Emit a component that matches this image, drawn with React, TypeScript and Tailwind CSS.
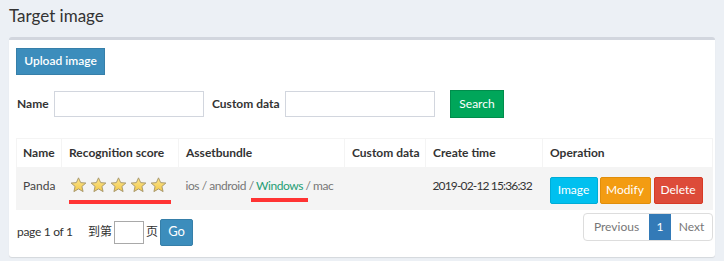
import React from "react";

const Star = () => (
  <svg width="17" height="16" viewBox="0 0 24 23">
    <defs>
      <linearGradient id="sg" x1="0" y1="0" x2="0" y2="1">
        <stop offset="0" stopColor="#fde58a" />
        <stop offset="1" stopColor="#f2c94c" />
      </linearGradient>
    </defs>
    <path
      d="M12 1.2 L15.1 8.1 L22.6 8.7 L16.9 13.6 L18.6 21 L12 17.1 L5.4 21 L7.1 13.6 L1.4 8.7 L8.9 8.1 Z"
      fill="url(#sg)"
      stroke="#a8976a"
      strokeWidth="1.4"
      strokeLinejoin="round"
    />
  </svg>
);

export default function App() {
  const font = { fontFamily: "Lato, 'Noto Sans CJK SC', sans-serif" };
  return (
    <div className="w-[724px] h-[261px] bg-[#ecf0f5] text-[#333] overflow-hidden whitespace-nowrap" style={font}>
      <div className="h-[37px] pl-[9px] pt-[4px] text-[17px] leading-[24px] text-[#333]">Target image</div>
      <div className="ml-[9px] w-[706px] h-[220px] bg-white border-t-[3px] border-[#d2d6de] rounded-[3px] shadow-[0_1px_1px_rgba(0,0,0,0.1)] px-[7px] pt-[7px]">
        <button className="h-[27px] w-[89px] bg-[#3c8dbc] border border-[#367fa9] text-white text-[12px] font-semibold">
          Upload image
        </button>
        <div className="flex items-center mt-[15px] h-[28px] text-[12px]">
          <span className="font-bold ml-[1px] w-[37px]">Name</span>
          <input className="w-[150px] h-[26px] border border-[#d2d6de] outline-none" />
          <span className="font-bold ml-[8px] w-[73px]">Custom data</span>
          <input className="w-[150px] h-[26px] border border-[#d2d6de] outline-none" />
          <button className="ml-[15px] w-[54px] h-[28px] bg-[#00a65a] border border-[#008d4c] text-white text-[12px]">
            Search
          </button>
        </div>
        <table className="mt-[20px] w-[697px] table-fixed border-collapse border border-[#f4f4f4] text-[12px]">
          <thead>
            <tr className="h-[29px] font-bold text-left">
              <th className="w-[45px] border border-[#f4f4f4] px-[6px]">Name</th>
              <th className="w-[117px] border border-[#f4f4f4] px-[7px]">Recognition score</th>
              <th className="w-[166px] border border-[#f4f4f4] px-[7px]">Assetbundle</th>
              <th className="w-[81px] border border-[#f4f4f4] px-[7px]">Custom data</th>
              <th className="w-[117px] border border-[#f4f4f4] px-[7px]">Create time</th>
              <th className="border border-[#f4f4f4] px-[7px]">Operation</th>
            </tr>
          </thead>
          <tbody>
            <tr className="h-[42px] bg-[#f4f4f4] align-top">
              <td className="px-[6px] pt-[9px] text-[#444]">Panda</td>
              <td className="px-[7px] pt-[9px]">
                <div className="flex gap-[3px] ml-[1px]">
                  <Star /><Star /><Star /><Star /><Star />
                </div>
                <div className="mt-[7px] w-[102px] h-[4px] bg-[#ff3333]" />
              </td>
              <td className="px-[7px] pt-[9px] text-[#777] tracking-[-0.45px]">
                <div className="relative">
                  ios / android / <span className="text-[#1f9e74]">Windows</span> / mac
                  <div className="absolute left-[65px] top-[21px] w-[57px] h-[4px] bg-[#ff3333]" />
                </div>
              </td>
              <td className="px-[7px]"></td>
              <td className="px-[7px] pt-[9px] text-[#333] tracking-[-0.85px]">2019-02-12 15:36:32</td>
              <td className="px-[7px] pt-[9px]">
                <div className="flex gap-[2px]">
                  <button className="h-[27px] w-[48px] bg-[#00c0ef] border border-[#00acd6] text-white text-[12px] rounded-[2px]">Image</button>
                  <button className="h-[27px] w-[51px] bg-[#f39c12] border border-[#e08e0b] text-white text-[12px] rounded-[2px]">Modify</button>
                  <button className="h-[27px] w-[49px] bg-[#dd4b39] border border-[#d73925] text-white text-[12px] rounded-[2px] ml-[1px]">Delete</button>
                </div>
              </td>
            </tr>
          </tbody>
        </table>
        <div className="flex items-start justify-between mt-[3px]">
          <div className="flex items-center h-[31px] mt-[4px] text-[12px] text-[#333]">
            <span className="ml-[1px] w-[55px] tracking-[-0.3px]">page 1 of 1</span>
            <span className="ml-[16px]">到第</span>
            <input className="ml-[2px] w-[30px] h-[23px] border border-[#a9a9a9] outline-none" />
            <span className="ml-[2px]">页</span>
            <button className="ml-[2px] w-[33px] h-[27px] bg-[#3c8dbc] border border-[#367fa9] text-white text-[13px] rounded-[2px]">Go</button>
          </div>
          <div className="flex h-[28px] border border-[#ddd] rounded-[4px] overflow-hidden text-[12px] -mr-[5px]">
            <span className="w-[65px] flex items-center justify-center text-[#777]">Previous</span>
            <span className="w-[22px] flex items-center justify-center bg-[#337ab7] text-white">1</span>
            <span className="w-[41px] flex items-center justify-center text-[#777]">Next</span>
          </div>
        </div>
      </div>
    </div>
  );
}
